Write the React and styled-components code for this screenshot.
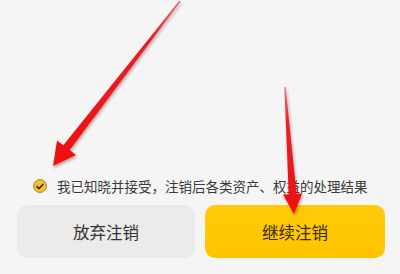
import React from "react";
import styled, { createGlobalStyle } from "styled-components";

const GlobalStyle = createGlobalStyle`
  html, body { margin: 0; padding: 0; background: #f5f5f5; }
  body { font-family: "Noto Sans CJK SC", "Noto Sans", sans-serif; }
`;

const Page = styled.div`
  position: relative;
  width: 400px;
  height: 274px;
  box-sizing: border-box;
  padding: 0 15px 16px 17px;
  display: flex;
  flex-direction: column;
  justify-content: flex-end;
  background: #f5f5f5;
  overflow: hidden;
`;

const AgreeRow = styled.label`
  display: flex;
  align-items: center;
  gap: 10px;
  height: 20px;
  padding-left: 16px;
  margin-bottom: 9px;
  font-size: 13.5px;
  color: #3a3a3a;
  white-space: nowrap;
  letter-spacing: 0;
`;

const CheckCircle = styled.span`
  width: 14px;
  height: 14px;
  box-sizing: border-box;
  border-radius: 50%;
  background: #f3c21c;
  border: 1px solid #9a8a55;
  display: flex;
  align-items: center;
  justify-content: center;
  flex: none;
`;

const Buttons = styled.div`
  display: flex;
  gap: 10px;
`;

const Button = styled.button`
  flex: none;
  width: ${(p) => p.$w}px;
  height: 53px;
  border: none;
  border-radius: 10px;
  font-family: "Noto Sans CJK SC", "Noto Sans", sans-serif;
  font-size: 16.5px;
  background: ${(p) =>
    p.$primary ? "linear-gradient(180deg, #ffca0a 0%, #ffc400 100%)" : "#ebebeb"};
  color: ${(p) => (p.$primary ? "#3a2c08" : "#333333")};
  display: flex;
  align-items: center;
  justify-content: center;
  padding: 0;
`;

const Overlay = styled.svg`
  position: absolute;
  left: 0;
  top: 0;
  pointer-events: none;
  filter: drop-shadow(1px 2px 1.5px rgba(80, 0, 0, 0.35));
`;

export default function App() {
  return (
    <>
      <GlobalStyle />
      <Page>
        <AgreeRow>
          <CheckCircle>
            <svg width="8" height="7" viewBox="0 0 8 7">
              <path d="M1 3.6 L3.1 5.6 L7 1.2" fill="none" stroke="#222" strokeWidth="1.5" strokeLinecap="round" strokeLinejoin="round" />
            </svg>
          </CheckCircle>
          我已知晓并接受，注销后各类资产、权益的处理结果
        </AgreeRow>
        <Buttons>
          <Button $w={178}>放弃注销</Button>
          <Button $w={180} $primary>继续注销</Button>
        </Buttons>
        <Overlay width="400" height="274" viewBox="0 0 400 274">
          <defs>
            <linearGradient id="g1" x1="180" y1="0" x2="60" y2="150" gradientUnits="userSpaceOnUse">
              <stop offset="0" stopColor="#f06070" />
              <stop offset="0.25" stopColor="#e8202a" />
              <stop offset="1" stopColor="#ee1111" />
            </linearGradient>
            <linearGradient id="g2" x1="285" y1="87" x2="292" y2="200" gradientUnits="userSpaceOnUse">
              <stop offset="0" stopColor="#f07080" />
              <stop offset="0.3" stopColor="#e8202a" />
              <stop offset="1" stopColor="#ee1111" />
            </linearGradient>
          </defs>
          <polygon
            fill="url(#g1)"
            points="180.5,1.4 69.7,150 76,155 53,166 57,140.5 63.3,145.2 179.5,0.6"
          />
          <polygon
            fill="url(#g2)"
            points="285.6,87 296.5,193.7 302.2,193.3 294,214 283,194.6 288.7,194.2 284.4,87"
          />
        </Overlay>
      </Page>
    </>
  );
}
